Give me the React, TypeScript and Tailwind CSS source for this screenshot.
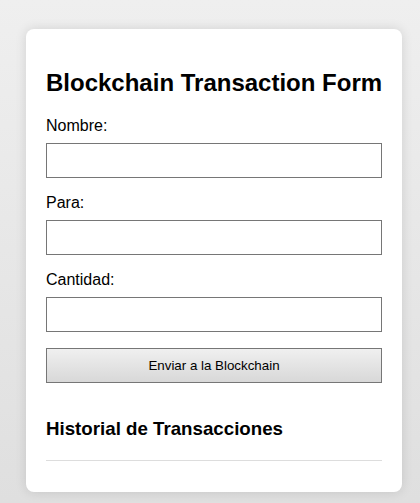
import React from 'react';

const fields = ['Nombre:', 'Para:', 'Cantidad:'];

const App: React.FC = () => {
  return (
    <div className="min-h-screen bg-gradient-to-b from-[#efefef] to-[#dfdfdf] pt-[29px] font-['Liberation_Sans',Arial,sans-serif] text-black">
      <div className="ml-[26px] w-[376px] rounded-[8px] bg-white px-5 pt-5 pb-[31px] shadow-[0_0_12px_rgba(0,0,0,0.12)]">
        <h2 className="mt-[20px] mb-[21px] whitespace-nowrap text-[24px] leading-[27px] font-bold">
          Blockchain Transaction Form
        </h2>
        <form onSubmit={e => e.preventDefault()} className="flex flex-col">
          {fields.map(label => (
            <React.Fragment key={label}>
              <label className="mb-2 block text-[16px] leading-[18px]">{label}</label>
              <input
                type="text"
                className="mb-4 block h-[35px] w-full border border-[#767676] bg-white px-2 outline-none"
              />
            </React.Fragment>
          ))}
          <button
            type="submit"
            className="h-[35px] w-full border border-[#767676] bg-gradient-to-b from-[#f0f0f0] to-[#d8d8d8] text-[13.33px] text-black"
          >
            Enviar a la Blockchain
          </button>
        </form>
        <h3 className="mt-[35px] mb-[21px] text-[18.72px] leading-[21px] font-bold">
          Historial de Transacciones
        </h3>
        <hr className="border-0 border-t border-[#dddddd]" />
      </div>
    </div>
  );
};

export default App;
